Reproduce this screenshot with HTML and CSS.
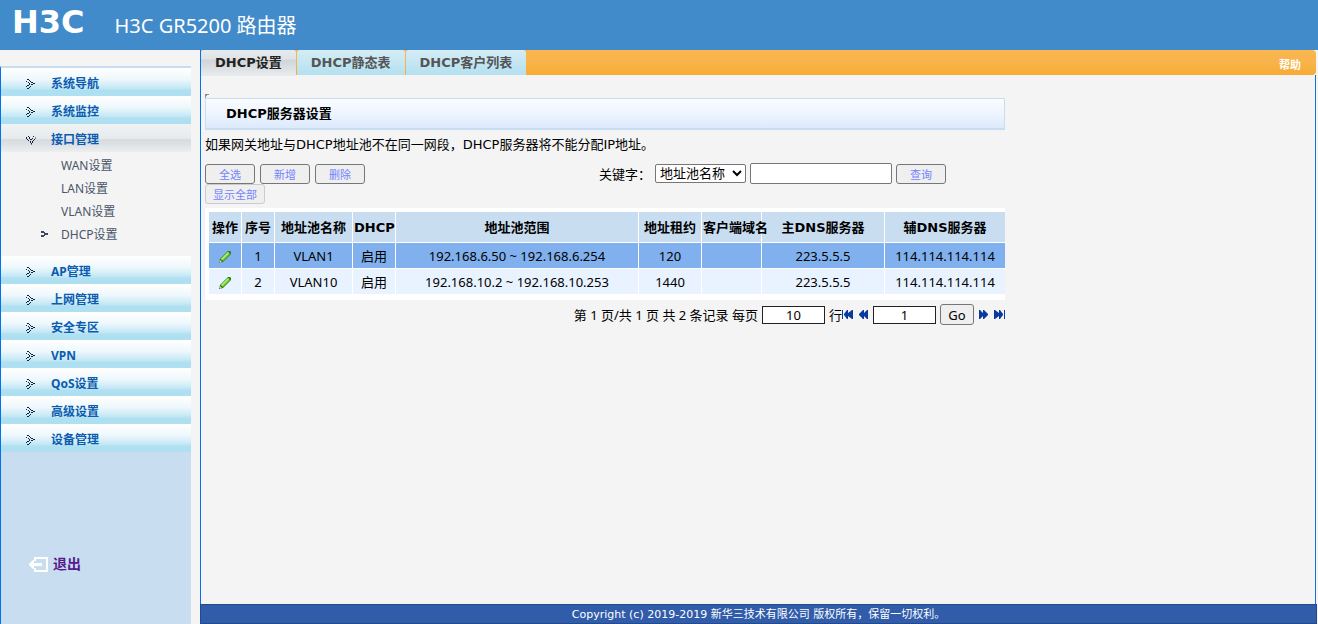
FILE: index.html
```html
<!DOCTYPE html>
<html lang="zh-CN">
<head>
<meta charset="utf-8">
<title>H3C GR5200 路由器</title>
<link rel="stylesheet" href="styles.css">
</head>
<body>
<svg class="defs" aria-hidden="true">
  <symbol id="arrow" viewBox="0 0 9 10"><path fill="#14233c" shape-rendering="crispEdges" d="M1 0h2v1h-2zM3 1h1v1h-1zM0 2h1v1h-1zM4 2h1v1h-1zM2 3h1v1h-1zM5 3h2v1h-2zM3 4h1v1h-1zM7 4h2v1h-2zM3 5h1v1h-1zM5 5h2v1h-2zM1 6h2v1h-2zM4 7h1v1h-1zM0 7h1v1h-1zM3 8h1v1h-1zM1 9h2v1h-2z"/></symbol>
  <symbol id="pencil" viewBox="0 0 14 14"><path fill="#2c7a12" d="M1 13l1-4 8-8 2 0 1 1v2l-8 8z"/><path fill="#6fd435" d="M3 9l7-7 2 2-7 7z"/><path fill="#b5f07c" d="M3 9l7-7 1 1-7 7z"/><path fill="#e8d3a0" d="M1 13l1-3 2 2z"/><path fill="#333" d="M1 13l0-1 1 1z"/></symbol>
  <symbol id="double" viewBox="0 0 9 9"><path fill="#0a3a9c" d="M0 0h1l3 3V0h1l4 4v1L5 9H4V6L1 9H0z"/></symbol>
  <symbol id="double-bar" viewBox="0 0 11 9"><path fill="#0a3a9c" d="M0 0h1l4 3V0h1l3 4v1L6 9H5V6L1 9H0zM10 0h1v9h-1z"/></symbol>
</svg>
<header class="header"><span class="logo">H3C</span><h1 class="product">H3C GR5200 路由器</h1></header>
<div class="body">
  <aside class="sidebar">
    <nav class="menu">
      <a class="item" href="#"><svg class="arrow"><use href="#arrow"/></svg>系统导航</a>
      <a class="item" href="#"><svg class="arrow"><use href="#arrow"/></svg>系统监控</a>
      <a class="item item-open" href="#"><svg class="arrow arrow-down"><use href="#arrow"/></svg>接口管理</a>
      <div class="submenu">
        <a class="subitem" href="#">WAN设置</a>
        <a class="subitem" href="#">LAN设置</a>
        <a class="subitem" href="#">VLAN设置</a>
        <a class="subitem current" href="#"><svg class="marker" viewBox="0 0 7 6"><path fill="#3c4a60" d="M0 0h3v1h1v1h3v2H4v1H3v1H0V4h3V2H0z"/></svg>DHCP设置</a>
      </div>
      <a class="item" href="#"><svg class="arrow"><use href="#arrow"/></svg>AP管理</a>
      <a class="item" href="#"><svg class="arrow"><use href="#arrow"/></svg>上网管理</a>
      <a class="item" href="#"><svg class="arrow"><use href="#arrow"/></svg>安全专区</a>
      <a class="item" href="#"><svg class="arrow"><use href="#arrow"/></svg>VPN</a>
      <a class="item" href="#"><svg class="arrow"><use href="#arrow"/></svg>QoS设置</a>
      <a class="item" href="#"><svg class="arrow"><use href="#arrow"/></svg>高级设置</a>
      <a class="item" href="#"><svg class="arrow"><use href="#arrow"/></svg>设备管理</a>
      <a class="logout" href="#"><svg class="exit" viewBox="0 0 19 15"><path fill="none" stroke="#fff" stroke-width="2" d="M6 4V1h12v13H6v-3"/><path fill="#fff" d="M0 7l4-4h1v3h8v3H5v3H4L0 8z"/></svg>退出</a>
    </nav>
  </aside>
  <div class="main">
    <div class="tabs">
      <a class="tab tab-active" href="#">DHCP设置</a>
      <a class="tab" href="#">DHCP静态表</a>
      <a class="tab" href="#">DHCP客户列表</a>
      <a class="help" href="#">帮助</a>
    </div>
    <main class="content">
      <svg class="corner" viewBox="0 0 4 4"><path fill="#909090" d="M0 0h4v1H2v1H1v2H0z"/></svg>
      <h2 class="heading">DHCP服务器设置</h2>
      <p class="note">如果网关地址与DHCP地址池不在同一网段，DHCP服务器将不能分配IP地址。</p>
      <form class="toolbar">
        <div class="actions">
          <button class="btn" type="button">全选</button>
          <button class="btn" type="button">新增</button>
          <button class="btn" type="button">删除</button>
        </div>
        <div class="search">
          <label for="field">关键字：</label>
          <select class="select" id="field"><option>地址池名称</option></select>
          <input class="keyword" type="text" aria-label="关键字">
          <button class="btn" type="button">查询</button>
        </div>
      </form>
      <button class="btn btn-wide" type="button" disabled>显示全部</button>
      <div class="grid">
        <table class="table">
          <colgroup><col class="c-op"><col class="c-op"><col class="c-name"><col class="c-dhcp"><col><col class="c-lease"><col class="c-domain"><col class="c-dns"><col class="c-dns2"></colgroup>
          <thead><tr><th>操作</th><th>序号</th><th>地址池名称</th><th>DHCP</th><th>地址池范围</th><th>地址租约</th><th>客户端域名</th><th>主DNS服务器</th><th>辅DNS服务器</th></tr></thead>
          <tbody>
            <tr class="selected"><td><svg class="pencil"><use href="#pencil"/></svg></td><td>1</td><td>VLAN1</td><td>启用</td><td>192.168.6.50 ~ 192.168.6.254</td><td>120</td><td></td><td>223.5.5.5</td><td>114.114.114.114</td></tr>
            <tr><td><svg class="pencil"><use href="#pencil"/></svg></td><td>2</td><td>VLAN10</td><td>启用</td><td>192.168.10.2 ~ 192.168.10.253</td><td>1440</td><td></td><td>223.5.5.5</td><td>114.114.114.114</td></tr>
          </tbody>
        </table>
      </div>
      <form class="pager">
        <label for="size">第 1 页/共 1 页 共 2 条记录 每页</label>
        <input class="num" id="size" type="text" value="10">
        <span class="rows">行<button class="step" type="button" aria-label="首页"><svg class="double-bar flip"><use href="#double-bar"/></svg></button></span>
        <button class="step prev" type="button" aria-label="上一页"><svg class="double flip"><use href="#double"/></svg></button>
        <input class="num" type="text" value="1" aria-label="页码">
        <button class="go" type="button">Go</button>
        <button class="step next" type="button" aria-label="下一页"><svg class="double"><use href="#double"/></svg></button>
        <button class="step" type="button" aria-label="末页"><svg class="double-bar"><use href="#double-bar"/></svg></button>
      </form>
    </main>
    <footer class="footer">Copyright (c) 2019-2019 新华三技术有限公司 版权所有，保留一切权利。</footer>
  </div>
</div>
</body>
</html>
```

FILE: styles.css
```css
* { box-sizing: border-box; }
body {
  margin: 0;
  min-height: 100vh;
  display: flex;
  flex-direction: column;
  background: #f4f4f4;
  color: #000;
  font: 13px/20px "Noto Sans", "Noto Sans CJK SC", sans-serif;
}
a { text-decoration: none; }
svg { display: block; flex: none; }
.defs { position: absolute; width: 0; height: 0; }

.header {
  height: 50px;
  padding-left: 12px;
  display: flex;
  gap: 30px;
  background: #428bca;
  color: #fff;
}
.logo { font: bold 32px/44px "DejaVu Sans", sans-serif; }
.product { margin: 0; font-size: 20px; font-weight: 400; line-height: 52px; }

.body { flex: 1; display: flex; }
.sidebar {
  width: 201px;
  padding: 16px 9px 0 0;
  display: flex;
  flex-direction: column;
  border-right: 1px solid #0072f0;
}
.menu {
  flex: 1;
  border-left: 1px solid #0072f0;
  border-top: 2px solid #c9ddf0;
  background: #c9ddf0;
}
.item {
  height: 28px;
  padding: 4px 0 0 25px;
  display: flex;
  align-items: center;
  gap: 16px;
  background: linear-gradient(#fff, #eef8fc 40%, #c4e8f5 72%, #aee0f2 80%, #aee0f2);
  color: #0a5cb0;
  font-size: 12px;
  font-weight: 700;
}
.item-open { background: linear-gradient(#f0f3f4, #e6eaed 52%, #d5dade 56%, #eceeef); }
.arrow { width: 9px; height: 10px; }
.arrow-down { transform: rotate(90deg); }
.submenu { padding: 2px 0 10px; background: #f4f4f4; }
.subitem {
  position: relative;
  display: block;
  padding-left: 60px;
  color: #4a5568;
  font-size: 12px;
  line-height: 23px;
}
.marker { position: absolute; left: 40px; top: 8px; width: 7px; height: 6px; }
.logout {
  margin-top: 102px;
  padding-left: 28px;
  display: flex;
  align-items: center;
  gap: 5px;
  color: #551a8b;
  font-size: 14px;
  font-weight: 700;
}
.exit { width: 19px; height: 15px; }

.main { flex: 1; min-width: 0; display: flex; flex-direction: column; }
.tabs {
  height: 25px;
  margin-right: 2px;
  display: flex;
  gap: 1px;
  background: linear-gradient(#fab650, #f8b34a 50%, #f7ac32);
  border-radius: 0 4px 4px 0;
}
.tab {
  padding: 0 14px;
  border-radius: 3px 3px 0 0;
  background: linear-gradient(#d4edf5, #b4e0f0);
  color: #555;
  font: bold 13px/25px "DejaVu Sans", "Noto Sans CJK SC", sans-serif;
}
.tab-active {
  height: 26px;
  background: linear-gradient(#e6ebed, #dfe3e6 34%, #d0d5d9 40%, #e9ecee);
  color: #222;
}
.help {
  margin-left: auto;
  padding-right: 15px;
  color: #fff;
  font-size: 11px;
  font-weight: 700;
  line-height: 30px;
}
.content {
  flex: 1;
  margin-right: 2px;
  padding: 19px 0 0 4px;
  border-right: 1px solid #1a6fd8;
}
.corner { width: 4px; height: 4px; }
.heading, .note, .toolbar, .grid, .pager { max-width: 800px; }
.heading {
  margin: 0;
  padding-left: 20px;
  border: 1px solid #c9ddf0;
  border-bottom-width: 2px;
  background: linear-gradient(#fafcff, #eef5ff 50%, #dceafc);
  font: bold 13px/29px "DejaVu Sans", "Noto Sans CJK SC", sans-serif;
}
.note {
  margin: 5px 0 8px;
  font-family: "DejaVu Sans", "Noto Sans CJK SC", sans-serif;
}
.toolbar { display: flex; justify-content: space-between; }
.actions, .search { display: flex; align-items: center; gap: 5px; }
.search { gap: 4px; padding-right: 59px; }
.btn {
  width: 50px;
  height: 20px;
  padding: 0;
  border: 1px solid #767676;
  border-radius: 3px;
  background: #efefef;
  color: #7484ff;
  font: 11px/16px "Noto Sans CJK SC", sans-serif;
}
.btn-wide { display: block; width: 60px; border-color: #cbcbcb; }
.select {
  width: 91px;
  height: 19px;
  padding: 0;
  border: 1px solid #767676;
  border-radius: 2px;
  background: #fff;
  color: #000;
  font: 13px "DejaVu Sans", "Noto Sans CJK SC", sans-serif;
}
.keyword {
  width: 142px;
  height: 21px;
  border: 1px solid #767676;
  border-radius: 2px;
  background: #fff;
}

.grid { margin-top: 4px; padding: 4px 0 5px 4px; background: #fff; }
.table { width: 100%; border-collapse: separate; border-spacing: 0; table-layout: fixed; }
.c-op { width: 33px; }
.c-name { width: 78px; }
.c-dhcp { width: 43px; }
.c-lease { width: 63px; }
.c-domain { width: 60px; }
.c-dns { width: 123px; }
.c-dns2 { width: 120px; }
.table th, .table td {
  padding: 0 1px;
  border: 0 solid #fff;
  border-width: 0 1px 1px 0;
  text-align: center;
  white-space: nowrap;
}
.table th:last-child, .table td:last-child { border-right-width: 0; }
.table th {
  height: 31px;
  padding-top: 2px;
  background: #c9ddf0;
  font: bold 13px/28px "DejaVu Sans", "Noto Sans CJK SC", sans-serif;
}
.table td { height: 26px; padding-top: 2px; background: #e8f3ff; line-height: 23px; }
.table .selected td { background: #80b0ee; }
.pencil { width: 14px; height: 14px; margin: 0 auto; }

.pager {
  margin-top: 4px;
  display: flex;
  align-items: center;
  justify-content: flex-end;
  gap: 4px;
}
.num {
  width: 63px;
  height: 18px;
  padding: 0;
  border: 1px solid #222;
  background: #fff;
  text-align: center;
  font: 13px/16px "Noto Sans", sans-serif;
}
.rows { display: flex; align-items: center; }
.step { padding: 0; border: 0; background: none; }
.prev { padding: 0 1px 0 2px; }
.next { padding: 0 2px 0 1px; }
.double-bar { width: 11px; height: 9px; }
.double { width: 9px; height: 9px; }
.flip { transform: scaleX(-1); }
.go {
  width: 34px;
  height: 21px;
  padding: 0;
  border: 1px solid #767676;
  border-radius: 3px;
  background: #efefef;
  color: #000;
  font: 13px/16px "Noto Sans", sans-serif;
}
.footer {
  margin: 0 1px 0 -1px;
  padding-top: 1px;
  border: 1px solid #254a8c;
  background: #305caa;
  color: #fff;
  text-align: center;
  font: 11px/17px "DejaVu Sans", "Noto Sans CJK SC", sans-serif;
}
```
